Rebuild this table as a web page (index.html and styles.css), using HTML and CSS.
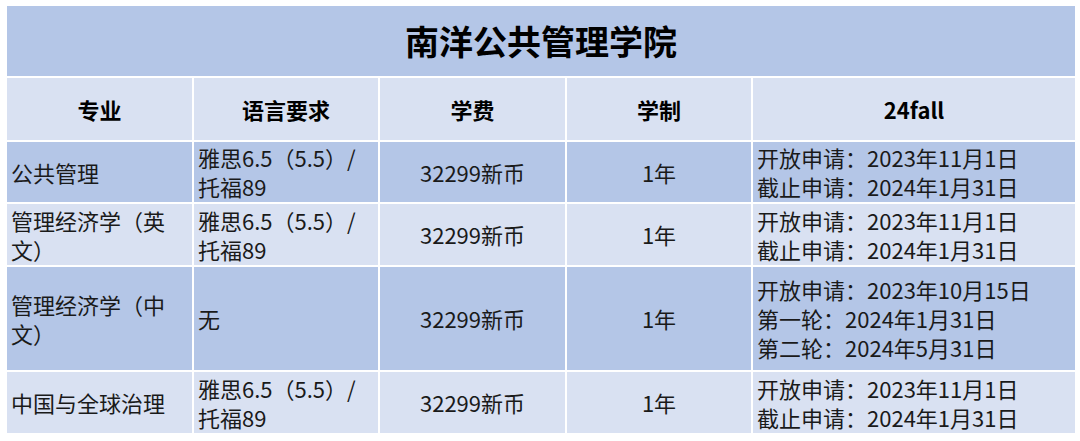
FILE: index.html
```html
<!DOCTYPE html>
<html lang="zh">
<head>
<meta charset="utf-8">
<title>南洋公共管理学院</title>
<link rel="stylesheet" href="styles.css">
</head>
<body>
<table class="grid">
  <colgroup>
    <col class="c1"><col class="c2"><col class="c3"><col class="c4"><col class="c5">
  </colgroup>
  <tr class="title-row dark"><td colspan="5" class="title">南洋公共管理学院</td></tr>
  <tr class="head-row light">
    <th>专业</th><th>语言要求</th><th>学费</th><th>学制</th><th>24fall</th>
  </tr>
  <tr class="row r1 dark">
    <td>公共管理</td>
    <td>雅思6.5（5.5）/<br>托福89</td>
    <td class="center">32299新币</td>
    <td class="center">1年</td>
    <td>开放申请：2023年11月1日<br>截止申请：2024年1月31日</td>
  </tr>
  <tr class="row light">
    <td>管理经济学（英文）</td>
    <td>雅思6.5（5.5）/<br>托福89</td>
    <td class="center">32299新币</td>
    <td class="center">1年</td>
    <td>开放申请：2023年11月1日<br>截止申请：2024年1月31日</td>
  </tr>
  <tr class="row tall dark">
    <td>管理经济学（中文）</td>
    <td>无</td>
    <td class="center">32299新币</td>
    <td class="center">1年</td>
    <td>开放申请：2023年10月15日<br>第一轮：2024年1月31日<br>第二轮：2024年5月31日</td>
  </tr>
  <tr class="row light">
    <td>中国与全球治理</td>
    <td>雅思6.5（5.5）/<br>托福89</td>
    <td class="center">32299新币</td>
    <td class="center">1年</td>
    <td>开放申请：2023年11月1日<br>截止申请：2024年1月31日</td>
  </tr>
</table>
</body>
</html>
```
FILE: styles.css
```css
html, body {
  margin: 0;
  padding: 0;
  background: #ffffff;
}
body {
  padding: 4px 5px;
  font-family: "Noto Sans CJK SC", "Noto Sans", sans-serif;
  color: #1a1a1a;
}
.grid {
  width: 1070px;
  border-collapse: collapse;
  table-layout: fixed;
}
.c1 { width: 187px; }
.c2 { width: 186px; }
.c3 { width: 187px; }
.c4 { width: 186px; }
.c5 { width: 324px; }
.grid td, .grid th {
  border: 2px solid #ffffff;
  font-size: 22px;
  line-height: 29px;
  padding: 0 4px;
  vertical-align: middle;
  text-align: left;
  font-weight: 400;
}
.dark td, .dark th { background: #b4c6e7; }
.light td, .light th { background: #d9e1f2; }
.title-row { height: 72px; }
.grid td.title {
  text-align: center;
  font-size: 34px;
  font-weight: 700;
  color: #000;
  line-height: 40px;
}
.head-row { height: 64px; }
.grid th {
  text-align: center;
  font-weight: 700;
  color: #000;
}
.row { height: 63px; }
.row.r1 { height: 62px; }
.row.tall { height: 105px; }
.grid td.center { text-align: center; }
```
